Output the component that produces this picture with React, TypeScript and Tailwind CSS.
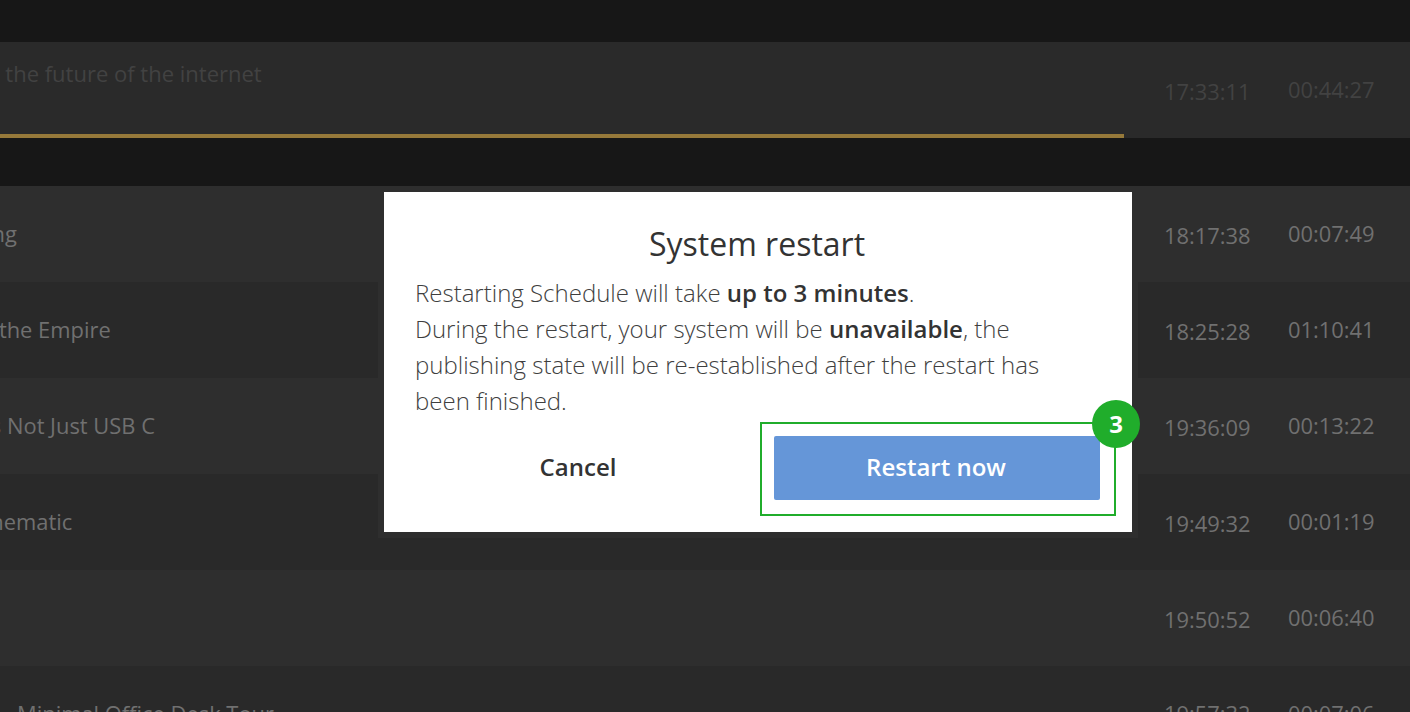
const font = "font-['Open_Sans',sans-serif]";

type Row = { bg: string; title: string; left: string; time: string; dur: string };

const rows: Row[] = [
  { bg: "bg-[#2e2e2e]", title: "Something Amazing", left: "-ml-[186px]", time: "18:17:38", dur: "00:07:49" },
  { bg: "bg-[#292929]", title: "The Fall of the Empire", left: "-ml-[111px]", time: "18:25:28", dur: "01:10:41" },
  { bg: "bg-[#2e2e2e]", title: "The Future is Not Just USB C", left: "-ml-[131px]", time: "19:36:09", dur: "00:13:22" },
  { bg: "bg-[#292929]", title: "Cinematic", left: "-ml-[29px]", time: "19:49:32", dur: "00:01:19" },
  { bg: "bg-[#2e2e2e]", title: "", left: "ml-0", time: "19:50:52", dur: "00:06:40" },
];

function Times({ time, dur, color }: { time: string; dur: string; color: string }) {
  return (
    <div className={`flex w-[246px] shrink-0 text-[21.9px] ${color}`}>
      <span className="mt-[4px] w-[124px]">{time}</span>
      <span className="mt-[2px]">{dur}</span>
    </div>
  );
}

export default function App() {
  return (
    <div className={`relative h-[712px] w-[1410px] overflow-hidden bg-[#171717] ${font}`}>
      <div className="h-[42px]" />
      <div className="relative flex h-[96px] items-center bg-[#2a2a2a]">
        <div className="min-w-0 flex-1 overflow-hidden whitespace-nowrap pb-[34px] text-[22px] text-[#424242]">
          <span className="-ml-[104px] inline-block">Web3 and the future of the internet</span>
        </div>
        <Times time="17:33:11" dur="00:44:27" color="text-[#424242]" />
        <div className="absolute bottom-0 left-0 h-[4px] w-[1124px] bg-[#96793a]" />
      </div>
      <div className="h-[48px]" />
      {rows.map((r) => (
        <div key={r.time} className={`flex h-[96px] items-center ${r.bg} text-[#707070]`}>
          <div className="min-w-0 flex-1 overflow-hidden whitespace-nowrap pt-[1px] text-[21.9px]">
            <span className={`inline-block ${r.left}`}>{r.title || "\u00a0"}</span>
          </div>
          <Times time={r.time} dur={r.dur} color="text-[#707070]" />
        </div>
      ))}
      <div className="flex h-[96px] bg-[#292929] text-[#707070]">
        <div className="min-w-0 flex-1 overflow-hidden whitespace-nowrap pt-[32px] text-[21.9px]">
          <span className="-ml-[49px] inline-block">Tour - Minimal Office Desk Tour</span>
        </div>
        <div className="flex w-[246px] shrink-0 pt-[32px] text-[21.9px]">
          <span className="w-[124px]">19:57:32</span>
          <span>00:07:06</span>
        </div>
      </div>

      <div className="absolute left-[378px] top-[186px] h-[352px] w-[760px] border-[6px] border-[#2e2e2e] bg-white">
        <div className="flex h-full flex-col pl-[31px] pr-[16px] pt-[32px]">
          <h2 className="pr-[17px] text-center text-[32px] leading-[40px] font-normal text-[#333333]">System restart</h2>
          <p className="mt-[11px] w-[670px] text-[24px] leading-[36px] font-light text-[#3f3f3f]">
            Restarting Schedule will take <b className="font-semibold text-[#333333]">up to 3 minutes</b>.<br />
            During the restart, your system will be <b className="font-semibold text-[#333333]">unavailable</b>, the publishing state will be re-established after the restart has been finished.
          </p>
          <div className="mt-[3px] flex items-center">
            <button className="w-[326px] shrink-0 pb-[4px] text-center text-[24px] font-semibold text-[#333333]">Cancel</button>
            <div className="relative ml-[19px] h-[94px] w-[356px] shrink-0 border-2 border-[#20ad2b] pl-[12px] pt-[12px]">
              <button className="h-[64px] w-[326px] rounded-[2px] bg-[#6596d8] pb-[2px] pr-[2px] text-[24px] font-semibold text-white">Restart now</button>
              <div className="absolute -right-[26px] -top-[24px] flex h-[48px] w-[48px] items-center justify-center rounded-full bg-[#20ad2b] text-[24px] font-bold text-white">3</div>
            </div>
          </div>
        </div>
      </div>
    </div>
  );
}
